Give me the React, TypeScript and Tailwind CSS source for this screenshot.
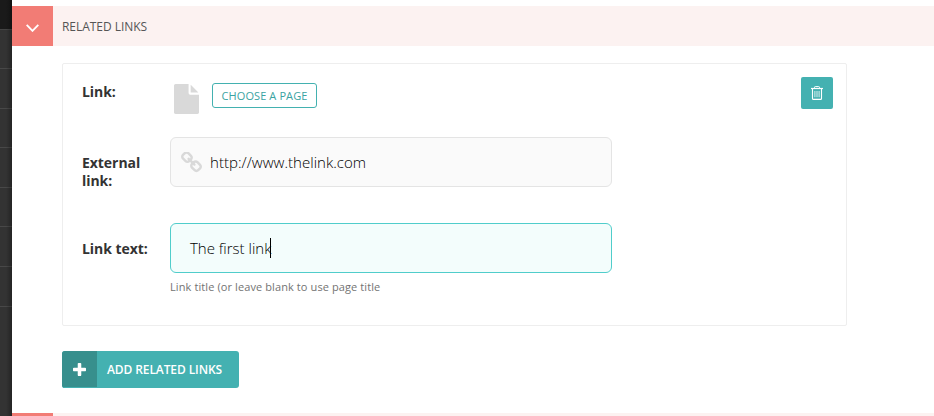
import React from 'react';

function FileIcon() {
  return (
    <svg className="block h-[30px] w-[25px] fill-[#d9d9d9]" viewBox="128 0 1536 1792" preserveAspectRatio="none">
      <path d="M1152 512v-472q22 14 36 28l408 408q14 14 28 36h-472zm-128 32q0 40 28 68t68 28h544v1056q0 40-28 68t-68 28h-1344q-40 0-68-28t-28-68v-1600q0-40 28-68t68-28h800v544z" />
    </svg>
  );
}

function ChainIcon() {
  return (
    <svg className="block size-[21px] fill-[#d9d9d9]" viewBox="80 80 1632 1632">
      <path d="M1520 1216q0-40-28-68l-208-208q-28-28-68-28-42 0-72 32 3 3 19 18.5t21.5 21.5 15 19 13 25.5 3.5 27.5q0 40-28 68t-68 28q-15 0-27.5-3.5t-25.5-13-19-15-21.5-21.5-18.5-19q-33 31-33 73 0 40 28 68l206 207q27 27 68 27 40 0 68-26l147-146q28-28 28-67zm-703-705q0-40-28-68l-206-207q-28-28-68-28-39 0-68 27l-147 146q-28 28-28 67 0 40 28 68l208 208q27 27 68 27 42 0 72-31-3-3-19-18.5t-21.5-21.5-15-19-13-25.5-3.5-27.5q0-40 28-68t68-28q15 0 27.5 3.5t25.5 13 19 15 21.5 21.5 18.5 19q33-31 33-73zm895 705q0 120-85 203l-147 146q-83 83-203 83-121 0-204-85l-206-207q-83-83-83-203 0-123 88-209l-88-88q-86 88-208 88-120 0-204-84l-208-208q-84-84-84-204t85-203l147-146q83-83 203-83 121 0 204 85l206 207q83 83 83 203 0 123-88 209l88 88q86-88 208-88 120 0 204 84l208 208q84 84 84 204z" />
    </svg>
  );
}

function PlusIcon() {
  return (
    <svg className="block size-[13px] fill-white" viewBox="192 128 1408 1408">
      <path d="M1600 736v192q0 40-28 68t-68 28h-416v416q0 40-28 68t-68 28h-192q-40 0-68-28t-28-68v-416h-416q-40 0-68-28t-28-68v-192q0-40 28-68t68-28h416v-416q0-40 28-68t68-28h192q40 0 68 28t28 68v416h416q40 0 68 28t28 68z" />
    </svg>
  );
}

function TrashIcon() {
  return (
    <svg className="block h-[14px] w-3 fill-none stroke-white" viewBox="0 0 12 14">
      <path d="M0 2.5H12" strokeWidth="1.2" />
      <path d="M3.5 2.5V1.4Q3.5.6 4.3.6H7.7Q8.5.6 8.5 1.4V2.5" strokeWidth="1" />
      <path d="M1.5 2.5V12.4Q1.5 13.4 2.5 13.4H9.5Q10.5 13.4 10.5 12.4V2.5" strokeWidth="1.1" />
      <path d="M3.9 5V11.2M6 5V11.2M8.1 5V11.2" strokeWidth="1" opacity=".8" />
    </svg>
  );
}

const label = 'w-[88px] shrink-0 text-sm leading-[18px] font-bold tracking-[-0.05px] text-[#333]';
const field = 'flex h-[50px] w-[442px] items-center rounded-md border text-[15px] font-light text-black';
const menuRows = ['h-[39px]', 'h-10', 'h-[39px]', 'h-10', 'h-[39px]', 'h-10', 'h-10'];

export default function App() {
  return (
    <div className="flex h-[416px] w-[934px] overflow-hidden bg-white font-['Open_Sans','Noto_Sans',sans-serif]">
      <aside className="relative w-3 shrink-0 bg-[#333]">
        <div className="h-[30px] border-b border-[#444] bg-[#1a1a1a]" />
        {menuRows.map((height, i) => (
          <div key={i} className={`${height} border-b border-[#484848]`} />
        ))}
        <div className="absolute inset-y-0 right-0 w-1.5 bg-linear-to-r from-transparent to-black/30" />
      </aside>

      <main className="flex w-[922px] flex-col pt-1.5">
        <header className="flex h-10 shrink-0 items-center bg-[#fcf2f1]">
          <div className="flex h-10 w-[41px] items-center justify-center bg-[#f27c75]">
            <svg className="mt-1 h-2 w-[13px] fill-none stroke-white" viewBox="0 0 13 8">
              <path d="M.7 .9L6.5 6.8L12.3 .9" strokeWidth="1.9" />
            </svg>
          </div>
          <h2 className="mt-0.5 ml-[9px] text-xs tracking-[-0.04px] text-[#555]">RELATED LINKS</h2>
        </header>

        <section className="mt-[17px] ml-[50px] h-[263px] w-[785px] shrink-0 rounded-xs border border-[#eee] pl-[19px]">
          <div className="flex h-[73px] items-start pt-[13px]">
            <div className={`${label} mt-[6px]`}>Link:</div>
            <div className="mt-[7px] ml-[3.5px]"><FileIcon /></div>
            <button className="mt-[6px] ml-[13.5px] flex h-[25px] w-[105px] items-center justify-center rounded-[3px] border border-[#43b1b0] pt-0.5 text-[11px] tracking-[0.1px] text-[#3aa3a2]">
              CHOOSE A PAGE
            </button>
            <button className="mr-[13px] ml-auto flex size-8 items-center justify-center rounded-xs bg-[#44b1b1]">
              <TrashIcon />
            </button>
          </div>

          <div className="flex h-[86px] items-start">
            <div className={`${label} pt-[17px]`}>External link:</div>
            <div className={`${field} border-[#e4e4e4] bg-[#fafafa] pl-[9.5px]`}>
              <ChainIcon />
              <span className="ml-[8.5px] tracking-[0.03px]">http://www.thelink.com</span>
            </div>
          </div>

          <div className="flex items-start">
            <div className={`${label} pt-[17px]`}>Link text:</div>
            <div>
              <div className={`${field} border-[#50cdcb] bg-[#f3fdfc] pl-[19px]`}>
                <span>The first link</span>
                <span className="-ml-px h-5 w-px bg-black" />
              </div>
              <p className="mt-[6px] text-[11px] leading-4 tracking-[0.1px] text-[#737373]">Link title (or leave blank to use page title</p>
            </div>
          </div>
        </section>

        <button className="mt-[25px] ml-[50px] flex h-[37px] w-[177px] shrink-0 items-center overflow-hidden rounded-[3px] bg-[#44b1b1] text-white">
          <span className="flex h-[37px] w-[35px] items-center justify-center border-b border-[#44b1b1] bg-[#378f8d]">
            <PlusIcon />
          </span>
          <span className="ml-[10px] text-xs font-semibold tracking-[-0.1px]">ADD RELATED LINKS</span>
        </button>

        <div className="mt-[25px] flex h-[3px] shrink-0 bg-[#fcf2f1]">
          <div className="w-[41px] bg-[#f27c75]" />
        </div>
      </main>
    </div>
  );
}
